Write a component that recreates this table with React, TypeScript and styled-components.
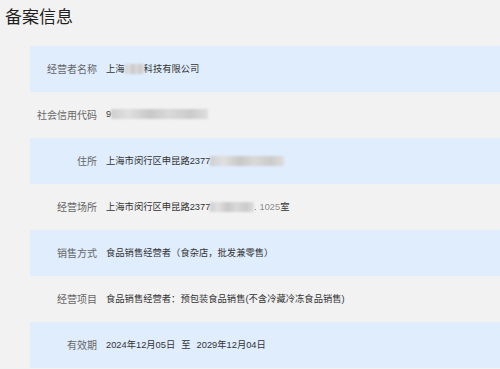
import styled, { createGlobalStyle } from "styled-components";

const GlobalStyle = createGlobalStyle`
  html, body {
    margin: 0;
    padding: 0;
    background: #f2f2f2;
  }
  body {
    font-family: "Liberation Sans", "Noto Sans CJK SC", sans-serif;
  }
`;

interface RecordItem {
  label: string;
  value: React.ReactNode;
}

const Page = styled.div`
  width: 500px;
  height: 369px;
  overflow: hidden;
  background: #f2f2f2;
`;

const Title = styled.h2`
  margin: 0;
  height: 46px;
  padding: 4px 0 0 5px;
  box-sizing: border-box;
  font-size: 17px;
  font-weight: 400;
  line-height: 24px;
  color: #1f1f1f;
  font-family: "Noto Sans CJK SC", sans-serif;
`;

const List = styled.div`
  padding-left: 30px;
`;

const Row = styled.div<{ $striped: boolean }>`
  display: flex;
  align-items: center;
  height: 46px;
  box-sizing: border-box;
  padding-bottom: 2px;
  background: ${(p) => (p.$striped ? "#e0edfd" : "transparent")};
`;

const Label = styled.div`
  width: 67px;
  flex: none;
  text-align: right;
  font-size: 10px;
  color: #666;
  margin-right: 9px;
`;

const Value = styled.div`
  font-size: 9.3px;
  color: #333;
  white-space: nowrap;
`;

// masked part of a value
const Masked = styled.span<{ $w: number }>`
  display: inline-block;
  vertical-align: middle;
  width: ${(p) => p.$w}px;
  height: 10px;
  margin-top: -2px;
  background: linear-gradient(
    90deg,
    #cfcfcf 0%,
    #e0e0e0 18%,
    #c8c8c8 40%,
    #d9d9d9 60%,
    #cbcbcb 82%,
    #dedede 100%
  );
  filter: blur(1px);
`;

const Soft = styled.span`
  color: #8a8a8a;
  filter: blur(0.5px);
`;

const Gap = styled.span`
  margin: 0 6px;
`;

const items: RecordItem[] = [
  {
    label: "经营者名称",
    value: (
      <>
        上海<Masked $w={19} />科技有限公司
      </>
    ),
  },
  {
    label: "社会信用代码",
    value: (
      <>
        9<Masked $w={97} />
      </>
    ),
  },
  {
    label: "住所",
    value: (
      <>
        上海市闵行区申昆路2377<Masked $w={74} />
      </>
    ),
  },
  {
    label: "经营场所",
    value: (
      <>
        上海市闵行区申昆路2377<Masked $w={44} />
        <Soft>. 1025</Soft>室
      </>
    ),
  },
  { label: "销售方式", value: "食品销售经营者（食杂店，批发兼零售）" },
  { label: "经营项目", value: "食品销售经营者：预包装食品销售(不含冷藏冷冻食品销售)" },
  {
    label: "有效期",
    value: (
      <>
        2024年12月05日<Gap>至</Gap>2029年12月04日
      </>
    ),
  },
];

export default function App() {
  return (
    <Page>
      <GlobalStyle />
      <Title>备案信息</Title>
      <List>
        {items.map((item, i) => (
          <Row key={item.label} $striped={i % 2 === 0}>
            <Label>{item.label}</Label>
            <Value>{item.value}</Value>
          </Row>
        ))}
      </List>
    </Page>
  );
}
